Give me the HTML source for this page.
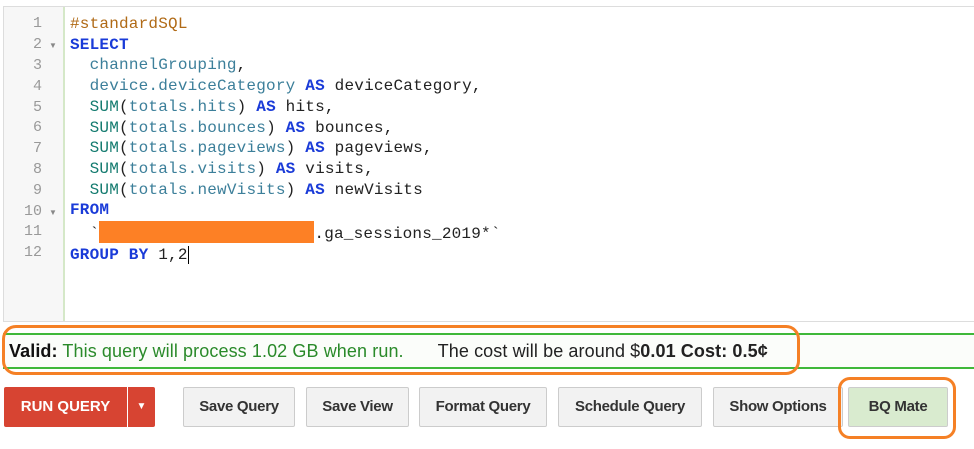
<!DOCTYPE html>
<html><head><style>
body{margin:0;width:974px;height:449px;background:#fff;position:relative;overflow:hidden;font-family:"Liberation Sans",sans-serif}
.ed{position:absolute;left:3px;top:6px;width:980px;height:314px;border:1px solid #ddd;background:#fff}
.gut{position:absolute;left:0;top:0;width:59px;height:314px;background:#f7f7f7;border-right:2px solid #d5e8c8}
.ln{position:absolute;left:0;width:38px;text-align:right;color:#999;font:15px "Liberation Mono",monospace}
.fold{position:absolute;left:45px;color:#888;font-size:8px}
.code{position:absolute;left:66px;top:7px;font:16px/20.7px "Liberation Mono",monospace;color:#222;white-space:pre;letter-spacing:0.2px}
.k{color:#1a3bd8;font-weight:bold}.c{color:#b06a16}.f{color:#127a6e}.v{color:#3c7f9a}
.status{position:absolute;left:3px;top:333px;width:975px;height:32px;border-top:2px solid #3fb83a;border-bottom:2px solid #3fb83a;background:#fbfdfa;font-size:18px;line-height:32px;letter-spacing:0.1px}
.oval{position:absolute;left:2px;top:325px;width:792px;height:44px;border:3px solid #f58025;border-radius:14px}
.btn{position:absolute;top:387px;height:38px;border:1px solid #ccc;border-radius:2px;background:#f2f2f2;font-weight:bold;font-size:15px;color:#333;line-height:38px;text-align:center;letter-spacing:-0.3px}
</style></head><body>
<div class="ed"><div class="gut">
<div class="ln" style="top:8px">1</div><div class="ln" style="top:29px">2</div><div class="fold" style="top:34px">▼</div>
<div class="ln" style="top:50px">3</div><div class="ln" style="top:71px">4</div><div class="ln" style="top:92px">5</div>
<div class="ln" style="top:112px">6</div><div class="ln" style="top:133px">7</div><div class="ln" style="top:154px">8</div>
<div class="ln" style="top:175px">9</div><div class="ln" style="top:196px">10</div><div class="fold" style="top:201px">▼</div>
<div class="ln" style="top:216px">11</div><div class="ln" style="top:237px">12</div>
</div>
<div class="code"><span class="c">#standardSQL</span>
<span class="k">SELECT</span>
  <span class="v">channelGrouping</span>,
  <span class="v">device.deviceCategory</span> <span class="k">AS</span> deviceCategory,
  <span class="f">SUM</span>(<span class="v">totals.hits</span>) <span class="k">AS</span> hits,
  <span class="f">SUM</span>(<span class="v">totals.bounces</span>) <span class="k">AS</span> bounces,
  <span class="f">SUM</span>(<span class="v">totals.pageviews</span>) <span class="k">AS</span> pageviews,
  <span class="f">SUM</span>(<span class="v">totals.visits</span>) <span class="k">AS</span> visits,
  <span class="f">SUM</span>(<span class="v">totals.newVisits</span>) <span class="k">AS</span> newVisits
<span class="k">FROM</span>
  `<span style="display:inline-block;width:215px;height:22px;background:#fd8025;vertical-align:-5px"></span>.ga_sessions_2019*`
<span class="k">GROUP BY</span> 1,2<span style="border-left:1px solid #000"></span></div>
</div>
<div class="status"><span style="margin-left:6px;font-weight:bold;color:#111">Valid:</span> <span style="color:#2a8a2a">This query will process 1.02 GB when run.</span><span style="margin-left:34px;color:#222">The cost will be around $<b>0.01 Cost: 0.5¢</b></span></div>
<div class="oval"></div>
<div style="position:absolute;left:4px;top:387px;width:123px;height:40px;background:#d74432;color:#fff;font-weight:bold;font-size:15px;line-height:40px;text-align:center;border-radius:2px 0 0 2px">RUN QUERY</div>
<div style="position:absolute;left:128px;top:387px;width:27px;height:40px;background:#d74432;color:#fff;font-size:10px;line-height:40px;text-align:center;border-radius:0 2px 2px 0">▼</div>
<div class="btn" style="left:183px;width:110px">Save Query</div>
<div class="btn" style="left:306px;width:101px">Save View</div>
<div class="btn" style="left:419px;width:126px">Format Query</div>
<div class="btn" style="left:558px;width:142px">Schedule Query</div>
<div class="btn" style="left:713px;width:128px">Show Options</div>
<div class="btn" style="left:848px;width:98px;background:#d9ebcf">BQ Mate</div>
<div style="position:absolute;left:838px;top:377px;width:112px;height:56px;border:3px solid #f58025;border-radius:12px"></div>
</body></html>
